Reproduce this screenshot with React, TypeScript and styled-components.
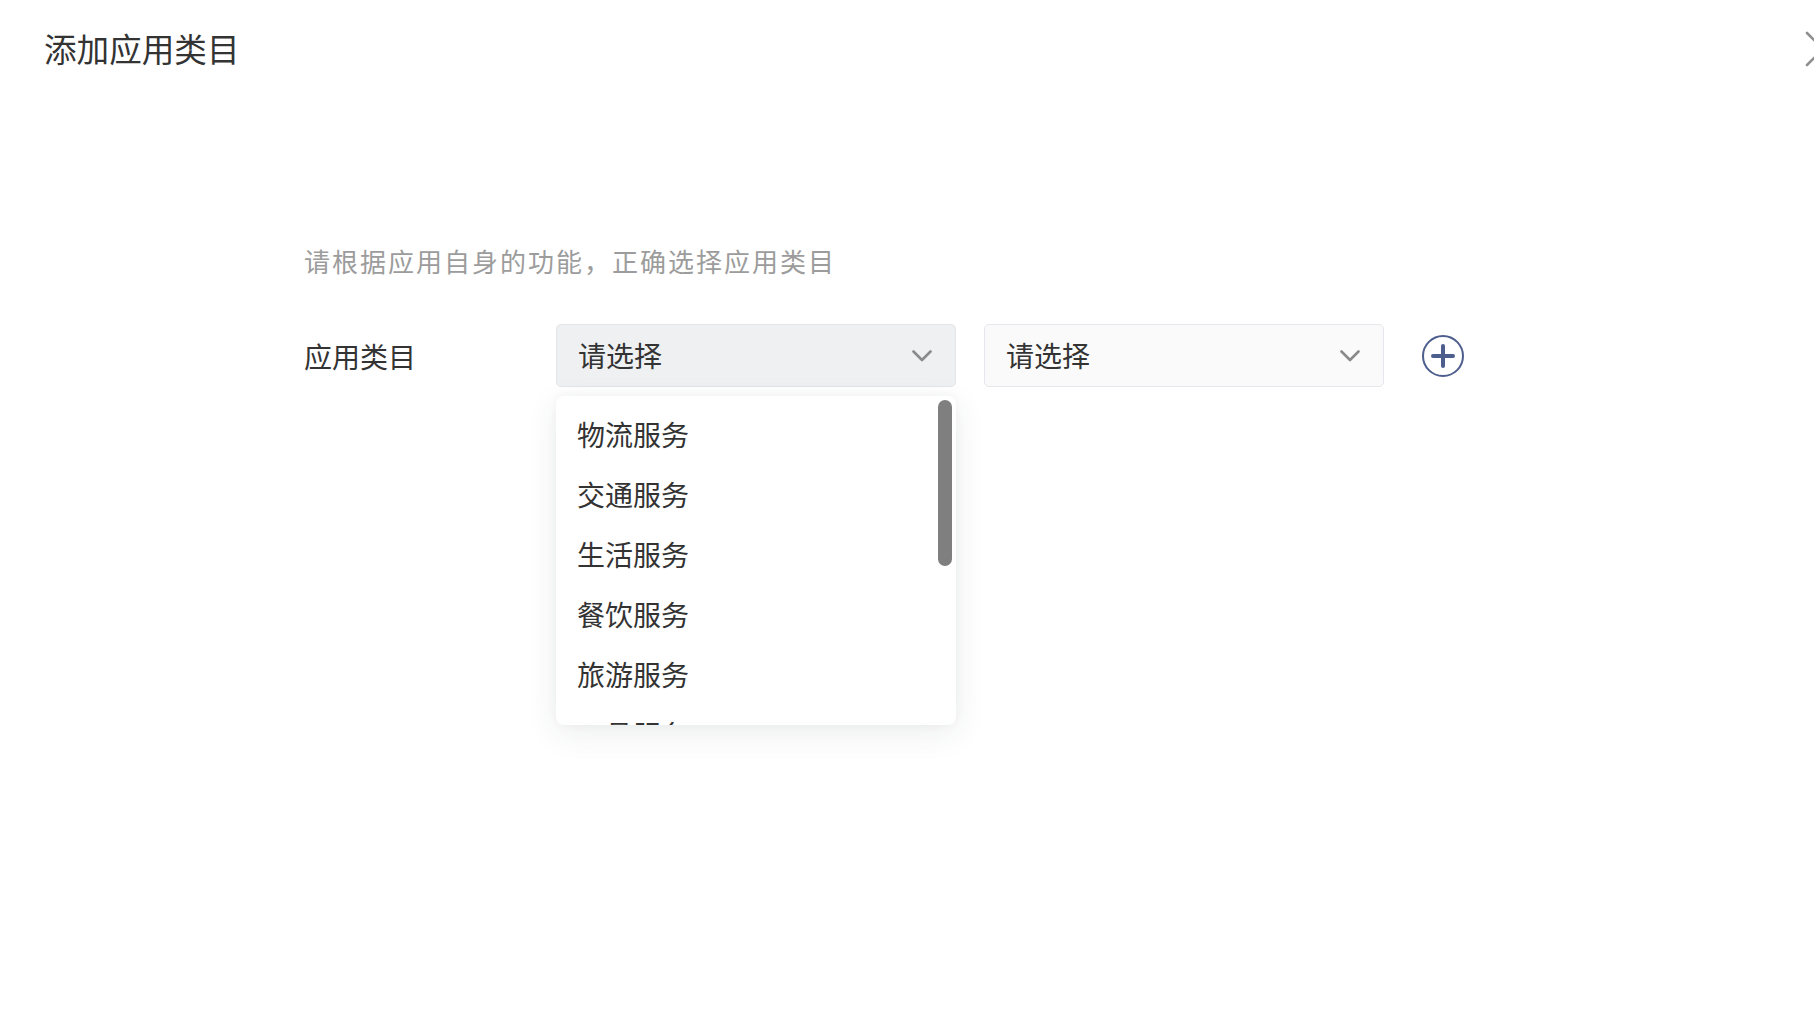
import React from "react";
import styled, { createGlobalStyle } from "styled-components";

const GlobalStyle = createGlobalStyle`
  html, body {
    margin: 0;
    padding: 0;
    background: #ffffff;
    overflow: hidden;
  }
  body {
    font-family: "Noto Sans CJK SC", "Noto Sans", "Liberation Sans", sans-serif;
    color: #333333;
  }
`;

const Page = styled.div`
  width: 1814px;
  height: 1028px;
  background: #ffffff;
  overflow: hidden;
`;

const Header = styled.header`
  position: relative;
  display: flex;
  align-items: center;
  padding: 32px 44px 0;
`;

const Title = styled.h1`
  margin: 0;
  font-size: 32.6px;
  line-height: 32px;
  font-weight: 400;
  color: #333333;
`;

const CloseButton = styled.button`
  position: absolute;
  right: -27px;
  top: 31px;
  width: 36px;
  height: 36px;
  padding: 0;
  border: none;
  background: transparent;
  display: flex;
  align-items: center;
  justify-content: center;
`;

const Body = styled.main`
  padding: 181px 0 0 304px;
`;

const Hint = styled.p`
  margin: 0;
  font-size: 26px;
  line-height: 32px;
  letter-spacing: 2px;
  color: #9c9c9c;
`;

const FormRow = styled.div`
  display: flex;
  align-items: center;
  margin-top: 46px;
`;

const Label = styled.label`
  width: 252px;
  font-size: 28px;
  line-height: 63px;
  padding-top: 2px;
  color: #333333;
`;

const SelectGroup = styled.div`
  display: flex;
  align-items: center;
  gap: 28px;
`;

const SelectWrap = styled.div`
  position: relative;
`;

const SelectBox = styled.div<{ $active?: boolean }>`
  box-sizing: border-box;
  width: 400px;
  height: 63px;
  padding: 0 23px 0 21px;
  display: flex;
  align-items: center;
  justify-content: space-between;
  border: 1px solid ${(p) => (p.$active ? "#e2e5e9" : "#e4e7eb")};
  border-radius: 5px;
  background: ${(p) => (p.$active ? "#eef0f2" : "#fafafa")};
  font-size: 28px;
  color: #333333;
`;

const SelectText = styled.span`
  margin-top: -2px;
`;

const Dropdown = styled.div`
  position: absolute;
  top: 72px;
  left: 0;
  width: 400px;
  height: 329px;
  box-sizing: border-box;
  background: #ffffff;
  border-radius: 8px;
  box-shadow: 0 8px 32px rgba(40, 50, 70, 0.09), 0 0 10px rgba(40, 50, 70, 0.04);
  overflow: hidden;
  z-index: 5;
`;

const OptionList = styled.ul`
  list-style: none;
  margin: 0;
  padding: 8px 0 0;
`;

const Option = styled.li`
  height: 60px;
  line-height: 60px;
  padding-left: 21px;
  font-size: 28px;
  color: #333333;
`;

const ScrollThumb = styled.div`
  position: absolute;
  top: 4px;
  right: 4px;
  width: 14px;
  height: 166px;
  border-radius: 7px;
  background: #7f7f7f;
`;

const AddButton = styled.button`
  margin-left: 37px;
  width: 44px;
  height: 44px;
  padding: 0;
  border: none;
  background: transparent;
  display: flex;
  align-items: center;
  justify-content: center;
`;

const Chevron = () => (
  <svg width="20" height="12" viewBox="0 0 20 12">
    <path
      d="M1.5 1.5 L10 10 L18.5 1.5"
      fill="none"
      stroke="#8a8a8a"
      strokeWidth="2.6"
      strokeLinecap="round"
      strokeLinejoin="round"
    />
  </svg>
);

const PlusCircle = () => (
  <svg width="44" height="44" viewBox="0 0 44 44">
    <circle cx="22" cy="22" r="20" fill="none" stroke="#4d5d8c" strokeWidth="2" />
    <path
      d="M12 22 H32 M22 12 V32"
      stroke="#4d5d8c"
      strokeWidth="4"
      strokeLinecap="round"
    />
  </svg>
);

const CloseIcon = () => (
  <svg width="36" height="36" viewBox="0 0 36 36">
    <path
      d="M2 2 L34 34 M34 2 L2 34"
      stroke="#8f8f8f"
      strokeWidth="2.6"
      strokeLinecap="round"
    />
  </svg>
);

const options = ["物流服务", "交通服务", "生活服务", "餐饮服务", "旅游服务", "工具服务"];

export default function App() {
  return (
    <Page>
      <GlobalStyle />
      <Header>
        <Title>添加应用类目</Title>
        <CloseButton aria-label="关闭">
          <CloseIcon />
        </CloseButton>
      </Header>
      <Body>
        <Hint>请根据应用自身的功能，正确选择应用类目</Hint>
        <FormRow>
          <Label>应用类目</Label>
          <SelectGroup>
            <SelectWrap>
              <SelectBox $active>
                <SelectText>请选择</SelectText>
                <Chevron />
              </SelectBox>
              <Dropdown>
                <OptionList>
                  {options.map((o) => (
                    <Option key={o}>{o}</Option>
                  ))}
                </OptionList>
                <ScrollThumb />
              </Dropdown>
            </SelectWrap>
            <SelectWrap>
              <SelectBox>
                <SelectText>请选择</SelectText>
                <Chevron />
              </SelectBox>
            </SelectWrap>
          </SelectGroup>
          <AddButton aria-label="添加">
            <PlusCircle />
          </AddButton>
        </FormRow>
      </Body>
    </Page>
  );
}
